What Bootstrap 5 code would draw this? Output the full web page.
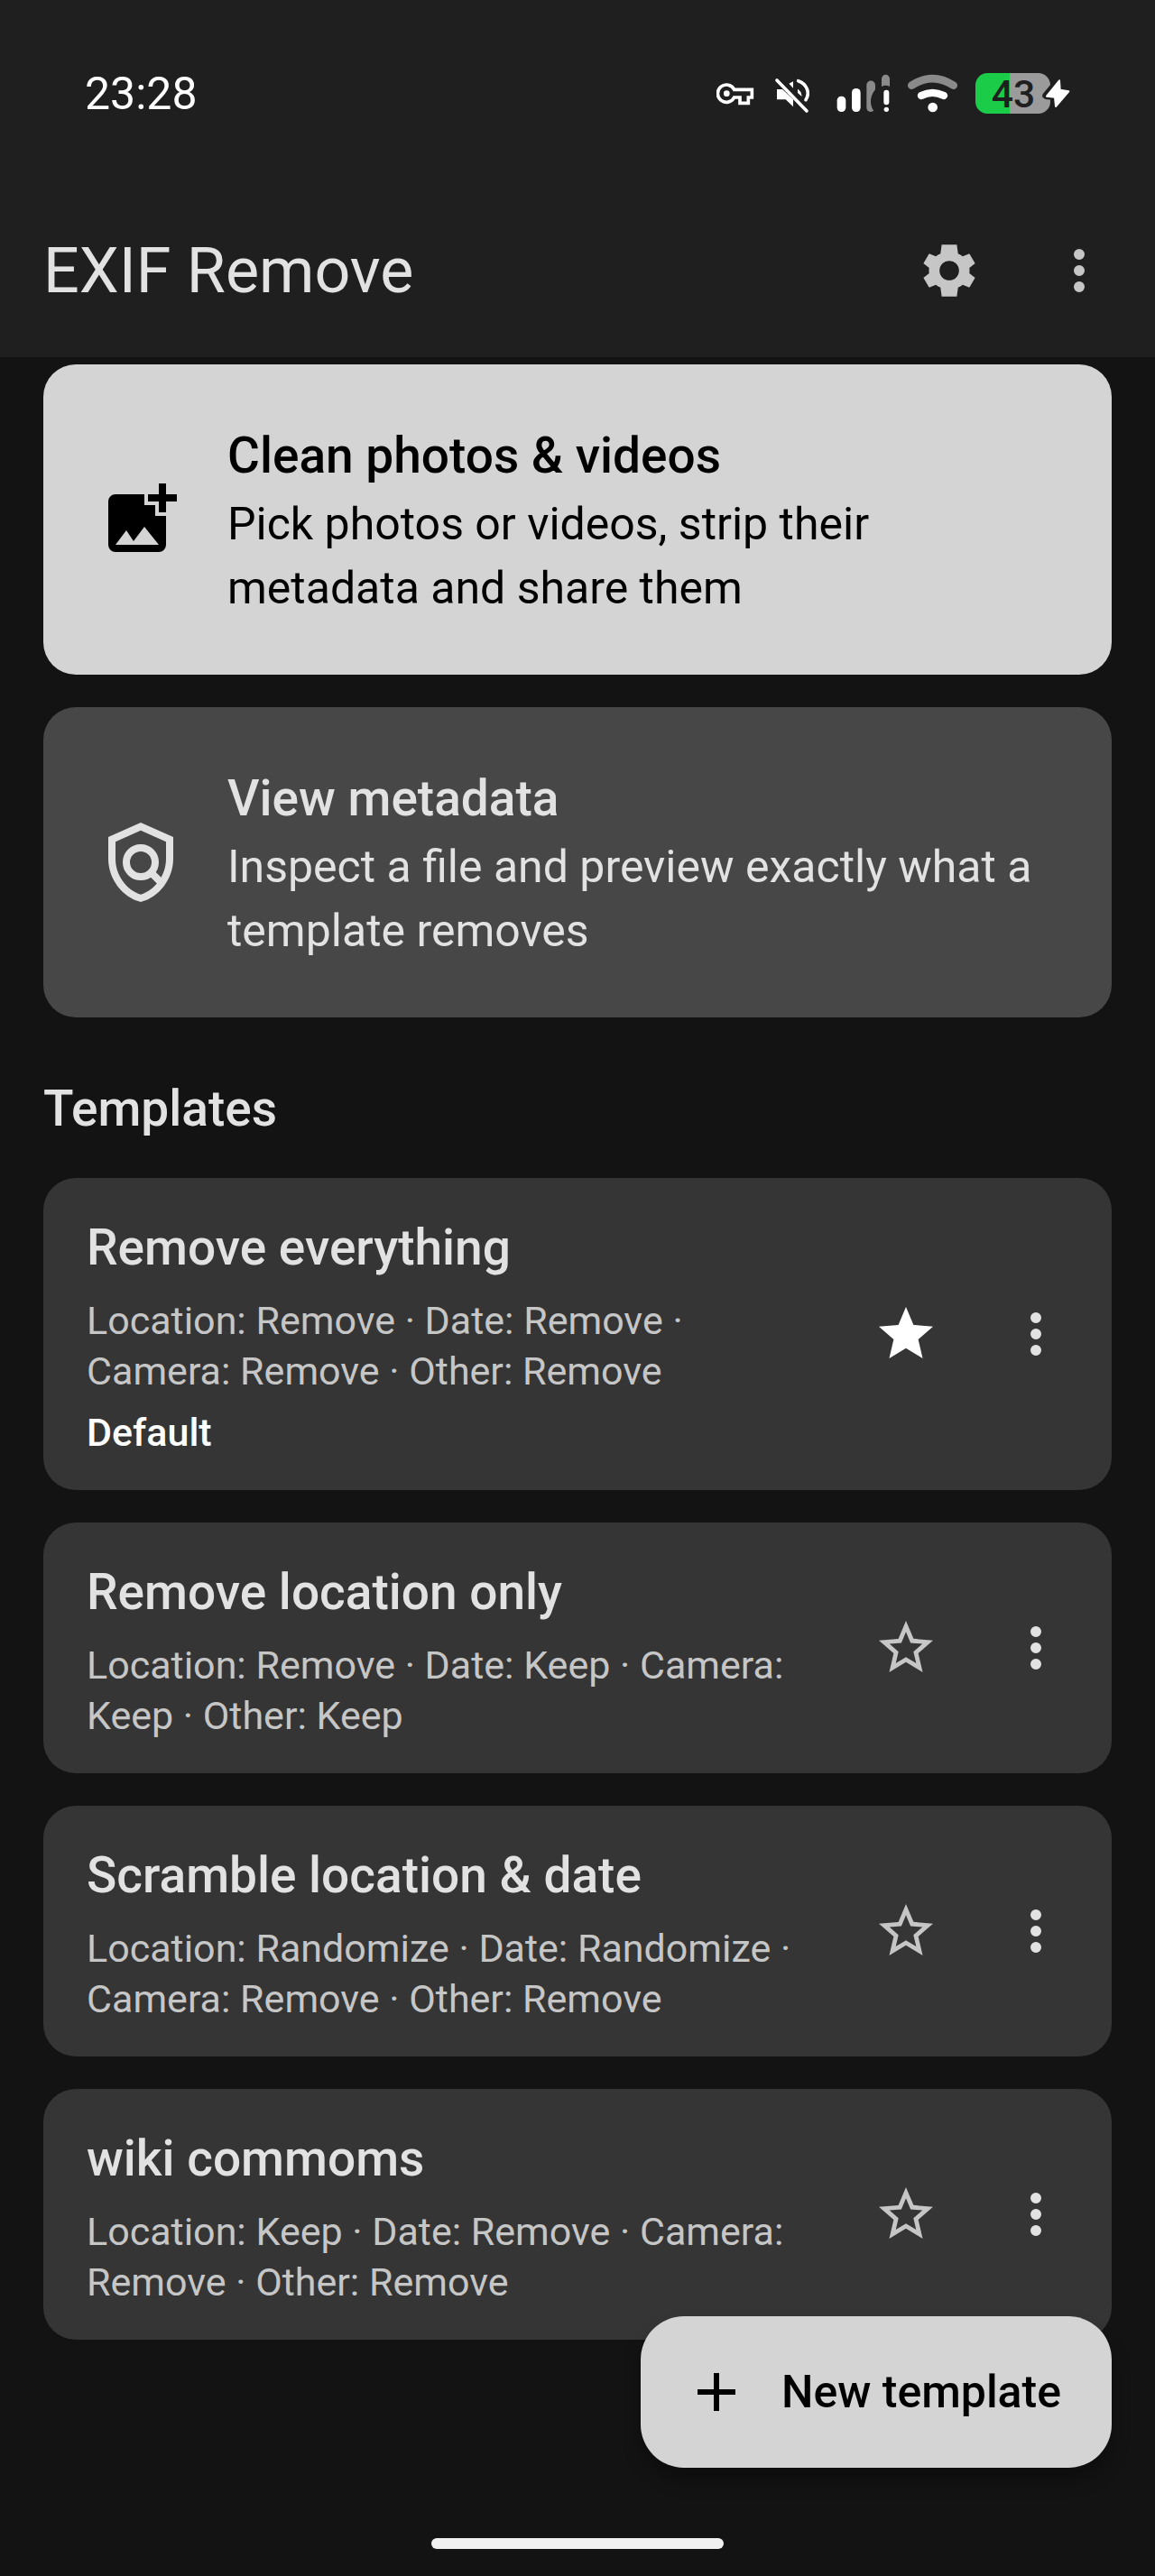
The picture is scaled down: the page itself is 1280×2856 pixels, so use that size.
<!DOCTYPE html>
<html lang="en" data-bs-theme="dark">
<head>
<meta charset="utf-8">
<meta name="viewport" content="width=device-width, initial-scale=1">
<title>EXIF Remove</title>
<link href="https://cdn.jsdelivr.net/npm/bootstrap@5.3.0/dist/css/bootstrap.min.css" rel="stylesheet">
<style>
  body { background: #131313; color: #e2e2e2; font-family: Roboto, sans-serif; font-size: 50px; line-height: 71px; }
  a, a:hover { color: inherit; }
  .app-top { background: #1f1f1f; }
  .status { height: 204px; padding: 4px 94px 0 94px; color: #fff; }
  .status-icons { gap: 16px; }
  .status-icons svg { height: 60px; }
  .app-bar { height: 192px; padding: 0 12px 0 48px; }
  .app-title { font-size: 70px; line-height: 84px; font-weight: 400; color: #e2e2e2; }
  .icon-btn { width: 144px; height: 144px; padding: 0; border: 0; border-radius: 72px; color: #c6c6c6; }
  .icon-btn svg, .fab svg { width: 72px; height: 72px; fill: currentColor; }
  .icon-btn.on { color: #fff; }
  .icon-btn.more { color: #e2e2e2; }
  .screen { padding: 8px 48px 262px; gap: 36px; }
  .tile { border-radius: 36px; color: #e2e2e2; --bs-card-border-width: 0; }
  .tile-action { padding: 60px; gap: 48px; background: #474747; }
  .tile-action.primary, .tile-action.primary:hover { background: #d4d4d4; color: #000; }
  .tile-action svg { width: 96px; height: 96px; fill: currentColor; }
  .tile-template { padding: 36px 12px 36px 48px; background: #353535; }
  .heading { font-size: 55px; line-height: 82px; font-weight: 500; color: #e2e2e2; }
  .primary .heading { color: #000; }
  .section { padding-top: 24px; }
  .stack { gap: 12px; font-size: 43px; line-height: 56px; }
  .rules { color: #c6c6c6; padding-right: 24px; }
  .default-tag { color: #fff; font-weight: 500; }
  .fab { right: 48px; bottom: 120px; height: 168px; min-width: 522px; padding: 0 48px; gap: 36px; border: 0; border-radius: 48px;
         background: #d4d4d4; color: #000; font-weight: 500; box-shadow: 0 14px 20px rgba(0,0,0,.3); }
  .home-bar { bottom: 30px; width: 324px; height: 12px; border-radius: 6px; background: #f0f0f0; }
</style>
</head>
<body>
<svg class="d-none" aria-hidden="true">
  <symbol id="i-more" viewBox="0 0 24 24"><path d="M12 8a2 2 0 1 0 0-4 2 2 0 0 0 0 4zm0 2a2 2 0 1 0 0 4 2 2 0 0 0 0-4zm0 6a2 2 0 1 0 0 4 2 2 0 0 0 0-4z"/></symbol>
  <symbol id="i-star" viewBox="0 0 24 24"><path d="M12 17.27 18.18 21l-1.64-7.03L22 9.24l-7.19-.61L12 2 9.19 8.63 2 9.24l5.46 4.73L5.82 21z"/></symbol>
  <symbol id="i-star-line" viewBox="0 0 24 24"><path d="m22 9.24-7.19-.62L12 2 9.19 8.63 2 9.24l5.46 4.73L5.82 21 12 17.27 18.18 21l-1.63-7.03L22 9.24zM12 15.4l-3.76 2.27 1-4.28-3.32-2.88 4.38-.38L12 6.1l1.71 4.04 4.38.38-3.32 2.88 1 4.28L12 15.4z"/></symbol>
</svg>

<header class="app-top">
  <div class="status d-flex align-items-center justify-content-between">
    <span>23:28</span>
    <div class="status-icons d-flex align-items-center">
      <svg width="44" viewBox="102 42 132 180" role="img" aria-label="VPN">
        <path d="M161 118A29 29 0 1 0 161 144H180V163H208V144H220V118Z" fill="none" stroke="#fff" stroke-width="11"/>
        <circle cx="136" cy="131" r="10" fill="#fff"/>
      </svg>
      <svg width="48" viewBox="282 42 144 180" role="img" aria-label="Sound off">
        <path d="M303 117h18l36 34v24l-25-24h-29zM343 98l14-7v22z" fill="#fff"/>
        <path d="M374 120q8 5 9 16l-9-8z" fill="#fff" stroke="#fff" stroke-width="4"/>
        <path d="M374 89C401 98 415 128 399 152" fill="none" stroke="#fff" stroke-width="11" stroke-linecap="round"/>
        <path d="M303 87 402 189" fill="none" stroke="#fff" stroke-width="11" stroke-linecap="round"/>
      </svg>
      <svg width="71" viewBox="474 42 213 180" role="img" aria-label="Mobile signal">
        <rect x="503" y="140" width="29" height="52" rx="14" fill="#fff"/>
        <rect x="552" y="114" width="29" height="78" rx="14" fill="#fff"/>
        <path d="M601 103a14 14 0 0 1 29 0v15q-16 20-15 42 1 18 10 28-6 4-11 4-13-1-13-15z" fill="#8a8a8a"/>
        <path d="M651 82a13 13 0 0 1 27 0v26q-13-8-27 0z" fill="#8a8a8a"/>
        <rect x="658" y="119" width="18" height="50" rx="9" fill="#fff"/>
        <circle cx="667" cy="184" r="8" fill="#fff"/>
      </svg>
      <svg width="59" viewBox="735 42 177 180" role="img" aria-label="Wi-Fi">
        <g fill="none" stroke-linecap="round">
          <path d="M751 104Q820 59 890 104" stroke="#8a8a8a" stroke-width="26"/>
          <path d="M783 138Q820 119 858 138" stroke="#fff" stroke-width="25"/>
        </g>
        <circle cx="821" cy="177" r="16" fill="#fff"/>
      </svg>
      <svg width="106" viewBox="960 42 318 180" role="img" aria-label="Battery 43 percent, charging">
        <path d="M1077 63H1172a40 40 0 0 1 40 40v55a40 40 0 0 1-40 40H1077z" fill="#9b9b9b"/>
        <path d="M1077 63H1003a40 40 0 0 0-40 40v55a40 40 0 0 0 40 40h74z" fill="#1bcc48"/>
        <text x="1089" y="176" text-anchor="middle" font-size="128" font-weight="500" fill="#1f1f1f">43</text>
        <path d="M1240 87 1198 138 1229 142 1232 174 1274 124 1244 120z" fill="#fff" stroke="#1f1f1f" stroke-width="24" stroke-linejoin="round"/>
        <path d="M1242 88 1200 140 1227 143 1230 174 1273 124 1244 119z" fill="#fff" stroke="#fff" stroke-width="6" stroke-linejoin="round"/>
      </svg>
    </div>
  </div>
  <div class="app-bar d-flex align-items-center">
    <h1 class="app-title mb-0 flex-grow-1">EXIF Remove</h1>
    <button type="button" class="btn icon-btn" aria-label="Settings">
      <svg viewBox="0 0 24 24"><path d="M19.430 12.980c.04-.32.07-.64.07-.98s-.03-.66-.07-.98l2.110-1.650-2.110-3.660-2.490 1c-.52-.4-1.080-.73-1.690-.98L14.800 2.400h-5.600l-.45 3.330c-.61.25-1.170.59-1.690.98l-2.490-1-2.110 3.660 2.110 1.650c-.04.32-.07.65-.07.98s.03.66.07.98l-2.110 1.650 2.110 3.660 2.490-1c.52.4 1.080.73 1.690.98L9.200 21.600h5.600l.45-3.330c.61-.25 1.170-.59 1.690-.98l2.490 1 2.110-3.660zM12 15.600a3.600 3.600 0 1 1 0-7.200 3.600 3.600 0 0 1 0 7.200z"/></svg>
    </button>
    <button type="button" class="btn icon-btn" aria-label="More options"><svg><use href="#i-more"/></svg></button>
  </div>
</header>

<main class="screen d-flex flex-column">
  <a href="#clean" class="card tile tile-action primary flex-row align-items-center text-decoration-none">
    <svg class="flex-shrink-0" viewBox="0 0 24 24"><path fill-rule="evenodd" d="M13 5H5a2 2 0 0 0-2 2v12a2 2 0 0 0 2 2h12a2 2 0 0 0 2-2v-8h-3V8h-3zM5 19l3-4 2 3 3-4 4 5z"/><path d="M17 2h2v3h3v2h-3v3h-2V7h-3V5h3z"/></svg>
    <div>
      <h2 class="heading mb-0">Clean photos &amp; videos</h2>
      <p class="mb-0">Pick photos or videos, strip their<br>metadata and share them</p>
    </div>
  </a>
  <a href="#view" class="card tile tile-action flex-row align-items-center text-decoration-none">
    <svg class="flex-shrink-0" viewBox="0 0 24 24"><path fill-rule="evenodd" d="M12 1 3 5v6c0 5.550 3.840 10.740 9 12 5.160-1.260 9-6.450 9-12V5zM5 6.300l7-3.110 7 3.110V11c0 4.520-2.980 8.690-7 9.930-4.020-1.240-7-5.410-7-9.930z"/><path d="M12 12m-4 0a4 4 0 1 0 8 0a4 4 0 1 0-8 0M14.800 14.800l3 3" fill="none" stroke="currentColor" stroke-width="2"/></svg>
    <div>
      <h2 class="heading mb-0">View metadata</h2>
      <p class="mb-0">Inspect a file and preview exactly what a<br>template removes</p>
    </div>
  </a>

  <h2 class="heading section mb-0">Templates</h2>

  <article class="card tile tile-template flex-row align-items-center">
    <div class="stack d-flex flex-column flex-grow-1">
      <h3 class="heading mb-0">Remove everything</h3>
      <p class="rules mb-0">Location: Remove · Date: Remove ·<br>Camera: Remove · Other: Remove</p>
      <span class="default-tag">Default</span>
    </div>
    <button type="button" class="btn icon-btn on flex-shrink-0" aria-label="Default template"><svg><use href="#i-star"/></svg></button>
    <button type="button" class="btn icon-btn more flex-shrink-0" aria-label="Template options"><svg><use href="#i-more"/></svg></button>
  </article>
  <article class="card tile tile-template flex-row align-items-center">
    <div class="stack d-flex flex-column flex-grow-1">
      <h3 class="heading mb-0">Remove location only</h3>
      <p class="rules mb-0">Location: Remove · Date: Keep · Camera:<br>Keep · Other: Keep</p>
    </div>
    <button type="button" class="btn icon-btn flex-shrink-0" aria-label="Make default"><svg><use href="#i-star-line"/></svg></button>
    <button type="button" class="btn icon-btn more flex-shrink-0" aria-label="Template options"><svg><use href="#i-more"/></svg></button>
  </article>
  <article class="card tile tile-template flex-row align-items-center">
    <div class="stack d-flex flex-column flex-grow-1">
      <h3 class="heading mb-0">Scramble location &amp; date</h3>
      <p class="rules mb-0">Location: Randomize · Date: Randomize ·<br>Camera: Remove · Other: Remove</p>
    </div>
    <button type="button" class="btn icon-btn flex-shrink-0" aria-label="Make default"><svg><use href="#i-star-line"/></svg></button>
    <button type="button" class="btn icon-btn more flex-shrink-0" aria-label="Template options"><svg><use href="#i-more"/></svg></button>
  </article>
  <article class="card tile tile-template flex-row align-items-center">
    <div class="stack d-flex flex-column flex-grow-1">
      <h3 class="heading mb-0">wiki commoms</h3>
      <p class="rules mb-0">Location: Keep · Date: Remove · Camera:<br>Remove · Other: Remove</p>
    </div>
    <button type="button" class="btn icon-btn flex-shrink-0" aria-label="Make default"><svg><use href="#i-star-line"/></svg></button>
    <button type="button" class="btn icon-btn more flex-shrink-0" aria-label="Template options"><svg><use href="#i-more"/></svg></button>
  </article>
</main>

<button type="button" class="fab position-fixed d-flex align-items-center">
  <svg viewBox="0 0 24 24"><path d="M19 13h-6v6h-2v-6H5v-2h6V5h2v6h6z"/></svg>
  New template
</button>
<div class="home-bar position-fixed start-50 translate-middle-x"></div>
<script src="https://cdn.jsdelivr.net/npm/bootstrap@5.3.0/dist/js/bootstrap.bundle.min.js"></script>
</body>
</html>
